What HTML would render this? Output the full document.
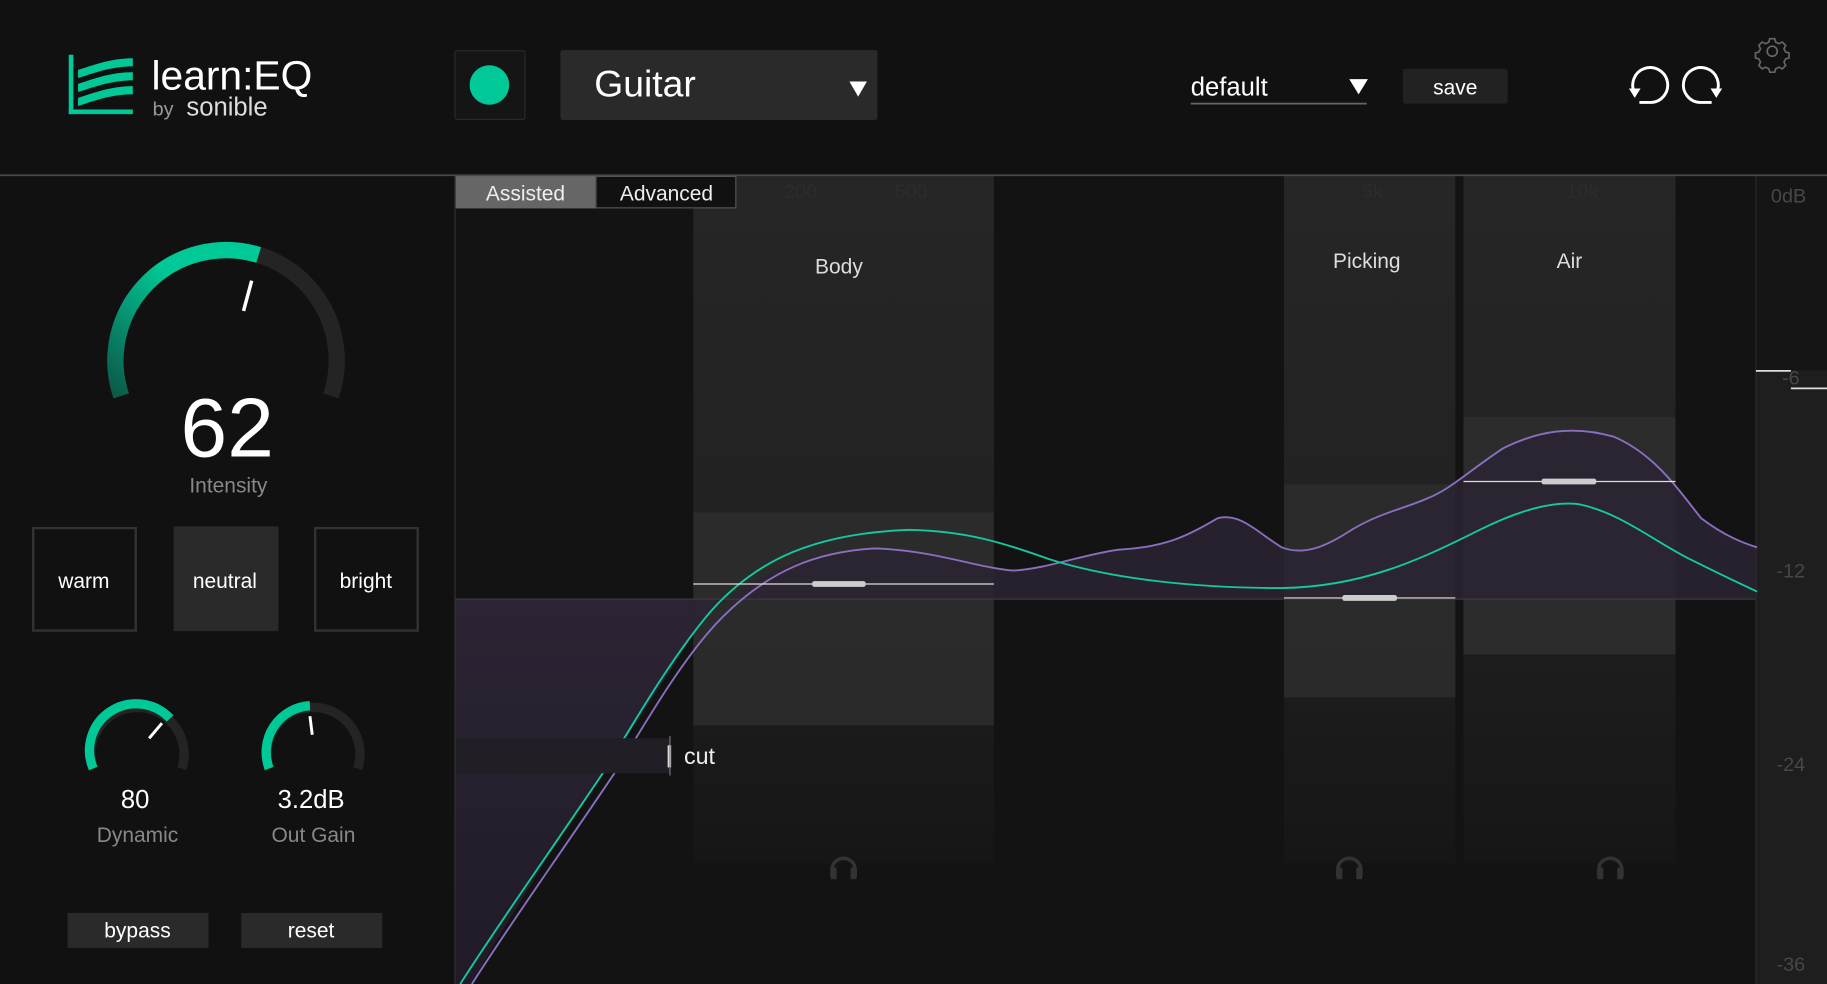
<!DOCTYPE html>
<html><head><meta charset="utf-8"><style>
html,body{margin:0;padding:0;background:#111;overflow:hidden}
svg{display:block}
text{font-family:"Liberation Sans",sans-serif}
</style></head><body>
<svg width="1827" height="984" viewBox="0 0 1568 845" preserveAspectRatio="none" xmlns="http://www.w3.org/2000/svg">
<defs>
<linearGradient id="band" x1="0" y1="0" x2="0" y2="1">
<stop offset="0" stop-color="#262626"/><stop offset="0.5" stop-color="#222"/><stop offset="1" stop-color="#161616"/></linearGradient>
<linearGradient id="knobg" x1="0" y1="1" x2="1" y2="0">
<stop offset="0" stop-color="#0c5a48"/><stop offset="0.6" stop-color="#00c896"/><stop offset="1" stop-color="#00c896"/></linearGradient>
<linearGradient id="lowfill" x1="0" y1="0" x2="0" y2="1">
<stop offset="0" stop-color="#2c2434"/><stop offset="1" stop-color="#201b26"/></linearGradient>
</defs>
<rect width="1568" height="845" fill="#111"/>
<rect x="391" y="151" width="1116" height="694" fill="#131313"/>
<rect x="595" y="151" width="258" height="590" fill="url(#band)"/>
<rect x="1102" y="151" width="147" height="590" fill="url(#band)"/>
<rect x="1256" y="151" width="182" height="590" fill="url(#band)"/>
<rect x="595" y="440" width="258" height="183" fill="#2c2c2c" opacity="0.9"/>
<rect x="1102" y="416" width="147" height="183" fill="#2c2c2c" opacity="0.9"/>
<rect x="1256" y="358" width="182" height="204" fill="#2e2e2e" opacity="0.9"/>
<rect x="1507" y="151" width="61" height="694" fill="#151515"/>
<rect x="1507" y="318" width="61" height="527" fill="#1e1e1e"/>
<line x1="1507" y1="151" x2="1507" y2="845" stroke="#2a2a2a"/>
<line x1="1507" y1="318.5" x2="1537" y2="318.5" stroke="#ddd" stroke-width="1.5"/>
<line x1="1537" y1="333.5" x2="1568" y2="333.5" stroke="#ddd" stroke-width="1.5"/>
<g fill="#474747" font-size="17" text-anchor="middle">
<text x="1535" y="174">0dB</text><text x="1537" y="330">-6</text><text x="1537" y="496">-12</text><text x="1537" y="662">-24</text><text x="1537" y="834">-36</text></g>
<path d="M391,514 L595,514 L595,545 C560,600 520,660 480,720 C450,770 420,815 405,845 L391,845 Z" fill="url(#lowfill)"/>
<path d="M595,514 L595,545 C630,500 680,475 750,471 C800,472 840,488 870,490 C900,488 930,476 960,472 C1000,470 1020,460 1045,445 C1065,440 1080,458 1100,470 C1120,478 1140,468 1160,455 C1185,440 1205,437 1225,428 C1245,420 1260,405 1290,385 C1320,370 1350,365 1385,375 C1420,390 1440,420 1460,445 C1480,460 1495,466 1508,470 L1508,514 Z" fill="#2b2433" opacity="0.85"/>
<line x1="391" y1="514.5" x2="1507" y2="514.5" stroke="#3a3a3a"/>
<path d="M405,845 C440,790 490,720 530,660 C560,610 590,560 620,530 C660,490 700,474 750,471 C800,472 840,488 870,490 C900,488 930,476 960,472 C1000,470 1020,460 1045,445 C1065,440 1080,458 1100,470 C1120,478 1140,468 1160,455 C1185,440 1205,437 1225,428 C1245,420 1260,405 1290,385 C1320,370 1350,365 1385,375 C1420,390 1440,420 1460,445 C1480,460 1495,466 1508,470" fill="none" stroke="#8a6fc0" stroke-width="1.6"/>
<path d="M395,845 C430,790 480,720 520,660 C550,610 580,560 610,525 C650,480 700,458 780,455 C830,456 860,466 900,480 C950,496 1020,505 1100,505 C1170,504 1220,480 1270,455 C1300,440 1330,430 1355,433 C1390,440 1420,465 1450,480 C1480,495 1495,502 1508,508" fill="none" stroke="#14c9a0" stroke-width="1.6"/>
<g stroke="#ddd"><line x1="595" y1="501.5" x2="853" y2="501.5"/><line x1="1102" y1="513.5" x2="1249" y2="513.5"/><line x1="1256" y1="413.5" x2="1438" y2="413.5"/></g>
<g fill="#ccc"><rect x="697" y="499" width="46" height="5" rx="2"/><rect x="1152" y="511" width="47" height="5" rx="2"/><rect x="1323" y="411" width="47" height="5" rx="2"/></g>
<rect x="391" y="634" width="184" height="30" fill="#221e25"/>
<rect x="573" y="640" width="3" height="19" fill="#ddd"/>
<line x1="575" y1="632" x2="575" y2="666" stroke="#777"/>
<text x="587" y="656" fill="#eee" font-size="20">cut</text>
<g fill="#ddd" font-size="18" text-anchor="middle"><text x="720" y="235">Body</text><text x="1173" y="230">Picking</text><text x="1347" y="230">Air</text></g>
<g fill="#2c2c2c" font-size="17" text-anchor="middle"><text x="687" y="170">200</text><text x="782" y="170">500</text><text x="1178" y="170">5k</text><text x="1358" y="170">10k</text></g>
<g fill="none" stroke="#333" stroke-width="3">
<path d="M714,753 v-6 a10,10 0 0 1 20,0 v6"/><path d="M1148,753 v-6 a10,10 0 0 1 20,0 v6"/><path d="M1372,753 v-6 a10,10 0 0 1 20,0 v6"/></g>
<g fill="#333"><rect x="713" y="745" width="5" height="10"/><rect x="730" y="745" width="5" height="10"/><rect x="1147" y="745" width="5" height="10"/><rect x="1164" y="745" width="5" height="10"/><rect x="1371" y="745" width="5" height="10"/><rect x="1388" y="745" width="5" height="10"/></g>
<rect x="391" y="151" width="120" height="28" fill="#666"/>
<rect x="511.5" y="151.5" width="120" height="27" fill="#111" stroke="#555"/>
<text x="451" y="172" fill="#eee" font-size="18" text-anchor="middle">Assisted</text>
<text x="572" y="172" fill="#eee" font-size="18" text-anchor="middle">Advanced</text>
<line x1="0" y1="150.5" x2="1568" y2="150.5" stroke="#4a4a4a" stroke-width="1.5"/>
<line x1="390.5" y1="151" x2="390.5" y2="845" stroke="#333"/>
<g fill="#00c896">
<rect x="59" y="47" width="4" height="51"/><rect x="59" y="94" width="55" height="4"/>
<path d="M67,60 C80,56 95,50 114,50 v7 C95,57 80,63 67,67 Z"/>
<path d="M67,72 C80,68 95,62 114,62 v7 C95,69 80,75 67,79 Z"/>
<path d="M67,84 C80,80 95,74 114,74 v7 C95,81 80,87 67,91 Z"/>
</g>
<text x="130" y="77" fill="#fff" font-size="35">learn:EQ</text>
<text x="131" y="99" fill="#999" font-size="17">by</text>
<text x="160" y="99" fill="#ddd" font-size="22">sonible</text>
<rect x="390.5" y="43.5" width="60" height="59" rx="2" fill="#151515" stroke="#2a2a2a"/>
<circle cx="420" cy="73" r="17" fill="#00c896"/>
<rect x="481" y="43" width="272" height="60" rx="2" fill="#2a2a2a"/>
<text x="510" y="83" fill="#fff" font-size="32">Guitar</text>
<path d="M729,70 h15 l-7.5,13 z" fill="#fff"/>
<text x="1022" y="82" fill="#fff" font-size="22">default</text>
<line x1="1022" y1="89" x2="1173" y2="89" stroke="#666" stroke-width="1.5"/>
<path d="M1158,68 h16 l-8,13 z" fill="#fff"/>
<rect x="1204" y="59" width="90" height="30" rx="2" fill="#222"/>
<text x="1249" y="81" fill="#fff" font-size="18" text-anchor="middle">save</text>
<g fill="none" stroke="#fff" stroke-width="2.5">
<path d="M1403,80 A15,15 0 1 1 1417,88 h-10"/>
<path d="M1473,80 A15,15 0 1 0 1459,88 h10"/></g>
<path d="M1398,76 h10 l-5,8 z M1468,76 h10 l-5,8 z" fill="#fff"/>
<g transform="translate(1521,44) scale(0.72)" fill="none" stroke="#666" stroke-width="2">
<circle r="6"/>
<path d="M-3,-15 h6 l1,4 l4,2 l4,-2 l4,4 l-2,4 l2,4 l4,1 v6 l-4,1 l-2,4 l2,4 l-4,4 l-4,-2 l-4,2 l-1,4 h-6 l-1,-4 l-4,-2 l-4,2 l-4,-4 l2,-4 l-2,-4 l-4,-1 v-6 l4,-1 l2,-4 l-2,-4 l4,-4 l4,2 l4,-2 z"/></g>
<path d="M104,340 A95,95 0 1 1 284,340" fill="none" stroke="#242424" stroke-width="14"/>
<path d="M104,340 A95,95 0 0 1 222,219" fill="none" stroke="url(#knobg)" stroke-width="14"/>
<line x1="216" y1="241" x2="209" y2="267" stroke="#fff" stroke-width="3"/>
<text x="195" y="392" fill="#fff" font-size="72" text-anchor="middle">62</text>
<text x="196" y="423" fill="#888" font-size="18" text-anchor="middle">Intensity</text>
<rect x="28.5" y="453.5" width="88" height="88" fill="#111" stroke="#333" stroke-width="2"/>
<rect x="149" y="452" width="90" height="90" fill="#2a2a2a"/>
<rect x="270.5" y="453.5" width="88" height="88" fill="#111" stroke="#333" stroke-width="2"/>
<g fill="#fff" font-size="18" text-anchor="middle"><text x="72" y="505">warm</text><text x="193" y="505">neutral</text><text x="314" y="505">bright</text></g>
<path d="M80,660 A40,40 0 1 1 156,660" fill="none" stroke="#242424" stroke-width="8"/>
<path d="M80,660 A40,40 0 0 1 146,617" fill="none" stroke="#00c896" stroke-width="8"/>
<line x1="139" y1="621" x2="128" y2="634" stroke="#fff" stroke-width="2.5"/>
<path d="M231,660 A40,40 0 1 1 307,660" fill="none" stroke="#242424" stroke-width="8"/>
<path d="M231,660 A40,40 0 0 1 266,606" fill="none" stroke="#00c896" stroke-width="8"/>
<line x1="266" y1="615" x2="268" y2="631" stroke="#fff" stroke-width="2.5"/>
<g text-anchor="middle" font-size="22" fill="#fff"><text x="116" y="694">80</text><text x="267" y="694">3.2dB</text></g>
<g text-anchor="middle" font-size="18" fill="#888"><text x="118" y="723">Dynamic</text><text x="269" y="723">Out Gain</text></g>
<rect x="58" y="784" width="121" height="30" fill="#2a2a2a"/>
<rect x="207" y="784" width="121" height="30" fill="#2a2a2a"/>
<g text-anchor="middle" font-size="18" fill="#fff"><text x="118" y="805">bypass</text><text x="267" y="805">reset</text></g>
</svg>
</body></html>
